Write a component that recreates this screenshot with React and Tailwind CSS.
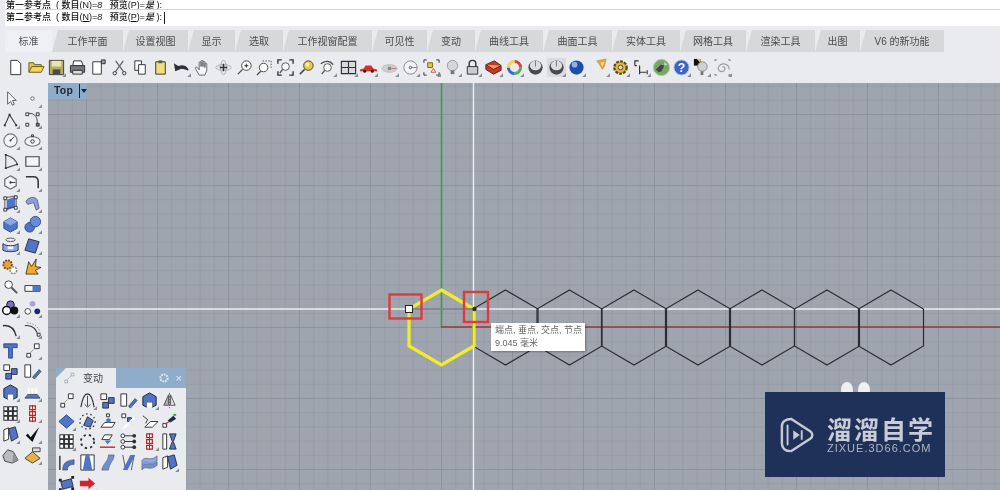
import React from 'react';

const TABS = [
  { label: '标准', w: 'w-[47px]', active: true },
  { label: '工作平面', w: 'w-[71px]' },
  { label: '设置视图', w: 'w-[65px]' },
  { label: '显示', w: 'w-[47px]' },
  { label: '选取', w: 'w-[48px]' },
  { label: '工作视窗配置', w: 'w-[89px]' },
  { label: '可见性', w: 'w-[55px]' },
  { label: '变动', w: 'w-[48px]' },
  { label: '曲线工具', w: 'w-[68px]' },
  { label: '曲面工具', w: 'w-[69px]' },
  { label: '实体工具', w: 'w-[68px]' },
  { label: '网格工具', w: 'w-[66px]' },
  { label: '渲染工具', w: 'w-[69px]' },
  { label: '出图', w: 'w-[45px]' },
  { label: 'V6 的新功能', w: 'w-[84px]' },
];

const B = '#4f74c8';
const D = '#2f3136';
const G = '#8a8d92';

const ICONS = {
  newDoc: <path d="M5 2.5h7l3.5 3.5v11.5H5z" fill="#fff" stroke={D} />,
  open: <><path d="M2 15V5h5l1 2h7v2" fill="#e8c44a" stroke="#6b5a10" /><path d="M2 15l3-6h13l-3 6z" fill="#f4d35e" stroke="#6b5a10" /></>,
  save: <><path d="M2.5 2.5h15v15h-15z" fill="#b5ad62" stroke="#3c3c3c" /><path d="M5 3h10v6H5z" fill="#e9e4b8" /><path d="M6 12h8v5H6z" fill="#4a4a4a" /></>,
  print: <><path d="M6 3h8l2 5H5z" fill="#fff" stroke={D} /><path d="M2.5 8h15v7h-15z" fill="#777" stroke={D} /><path d="M5 13h10v4H5z" fill="#ddd" stroke={D} /></>,
  props: <><path d="M4 4h9v13H4z" fill="#fff" stroke={D} /><path d="M13 2h4v4h-4z" fill="#999" stroke={D} /></>,
  cut: <><path d="M6 3l8 11M14 3L6 14" stroke="#666" strokeWidth="1.4" fill="none" /><circle cx="5" cy="16" r="1.8" fill="none" stroke={D} /><circle cx="15" cy="16" r="1.8" fill="none" stroke={D} /></>,
  copy: <><path d="M4 3h7v10H4z" fill="#fff" stroke={D} /><path d="M8 7h7v10H8z" fill="#fff" stroke={D} /></>,
  paste: <><path d="M5 4h10v13H5z" fill="#f2df79" stroke={D} /><path d="M8 2.5h4v3H8z" fill="#555" /></>,
  undo: <path d="M17 13c-2-5-7-6-12-3M3 7l1 6 5-2z" fill={D} stroke={D} strokeWidth="1.5" />,
  hand: <path d="M6.5 18L2.5 11c-.5-1 1-2 2-1l2 2.5V5c0-1.5 2-1.5 2 0v4V3.5c0-1.5 2-1.5 2 0V9V4.500c0-1.500 2-1.500 2 0V10V6.500c0-1.500 2-1.500 2 0V13l-2 5z" fill="#f4f5f6" stroke="#444" strokeWidth=".8" />,
  axes: <><ellipse cx="10" cy="10" rx="8" ry="3" fill="none" stroke="#aaa" /><ellipse cx="10" cy="10" rx="3" ry="7.5" fill="none" stroke="#aaa" /><path d="M10 6v8M6 10h8" stroke={D} strokeWidth="1.6" /></>,
  zoomPlus: <><circle cx="12" cy="8" r="5" fill="#fff" stroke="#444" /><path d="M8 12l-5 5M10 8h4M12 6v4" stroke="#444" strokeWidth="1.2" /></>,
  zoomWin: <><path d="M8 3h9v9" fill="none" stroke="#555" strokeDasharray="1.5 1.5" /><circle cx="9" cy="10" r="4.5" fill="#fff" stroke="#444" /><path d="M6 14l-4 4" stroke="#444" strokeWidth="1.4" /></>,
  zoomExt: <><path d="M2 6V2h4M14 2h4v4M2 14v4h4M18 14v4h-4" fill="none" stroke={D} strokeWidth="1.4" /><circle cx="10" cy="9" r="4" fill="#fff" stroke="#555" /><path d="M7 12l-3 4" stroke="#555" strokeWidth="1.4" /></>,
  zoomSel: <><circle cx="12" cy="8" r="5" fill="#e9c93f" stroke="#444" /><circle cx="11" cy="7" r="2" fill="#fff6c0" /><path d="M8 12l-5 5" stroke="#444" strokeWidth="1.6" /></>,
  rotView: <><path d="M3 6c5-4 10-3 13 1" fill="none" stroke="#444" strokeWidth="1.3" /><circle cx="10" cy="10" r="4" fill="#fff" stroke="#555" /><path d="M7 13l-3 4" stroke="#555" strokeWidth="1.4" /></>,
  grid4: <path d="M2.5 3.5h15v13h-15zM10 3.5v13M2.5 10h15" fill="#d8dadd" stroke={D} strokeWidth="1.2" />,
  car: <><path d="M1 12l4-1 2-3h6l2 3 4 1v2H1z" fill="#d3302c" /><circle cx="6" cy="14" r="1.6" fill="#222" /><circle cx="14" cy="14" r="1.6" fill="#222" /></>,
  hide: <><ellipse cx="10" cy="11" rx="8" ry="4" fill="#cfd1d5" stroke="#bbb" /><circle cx="10" cy="11" r="2" fill="#888" /><path d="M12 11h5" stroke="#c66" /></>,
  circleDot: <><circle cx="10" cy="10" r="7" fill="#f2f3f5" stroke="#888" /><circle cx="10" cy="10" r="1.3" fill="none" stroke="#555" /><path d="M11 10h6" stroke="#888" /></>,
  ptsBox: <><path d="M2 5V2h3M15 2h3v3M2 15v3h3M15 18h3v-3" fill="none" stroke={D} /><path d="M6 5h5v5H6z" fill="#eac73d" stroke="#7a6512" /><path d="M12 11l2.5 4h-5z" fill="#fff" stroke="#c55" /></>,
  bulb: <><circle cx="10" cy="8" r="5.5" fill="#d4d6d9" stroke="#999" /><path d="M8 13h4v4H8z" fill="#777" /></>,
  lock: <><path d="M6.5 9V6a3.5 3.5 0 017 0v3" fill="none" stroke="#333" strokeWidth="1.5" /><path d="M4.5 9h11v8h-11z" fill="#c9cbce" stroke="#333" /></>,
  book: <><path d="M2 7l9-4 7 5v5l-8 4-8-5z" fill="#c8352c" stroke="#5a2318" /><path d="M2 7l8 5 8-4" fill="#e8a23d" stroke="#5a2318" /></>,
  wheel: <><circle cx="10" cy="10" r="6" fill="none" stroke="#ddd" strokeWidth="4" /><path d="M10 2a8 8 0 018 8h-3a5 5 0 00-5-5z" fill="#e23d3d" /><path d="M18 10a8 8 0 01-8 8v-3a5 5 0 005-5z" fill="#3dbb4d" /><path d="M10 18a8 8 0 01-8-8h3a5 5 0 005 5z" fill="#3a62d8" /><path d="M2 10a8 8 0 018-8v3a5 5 0 00-5 5z" fill="#eedd3a" /></>,
  sphere: <><circle cx="10" cy="10" r="7.5" fill="#4a4a4a" /><ellipse cx="10" cy="8" rx="6" ry="5" fill="#dcdde0" /><path d="M10 3v6" stroke="#777" /></>,
  sphereBox: <><path d="M0 0h20v20H0z" fill="#d9dbde" /><circle cx="10" cy="10" r="7.5" fill="#4a4a4a" /><ellipse cx="10" cy="8" rx="6" ry="5" fill="#dcdde0" /><path d="M10 3v6" stroke="#777" /></>,
  sphereBlue: <><circle cx="10" cy="10" r="7.5" fill="#1f4ea8" /><circle cx="8" cy="7" r="3" fill="#8fb0ea" /></>,
  funnel: <><path d="M6 3l10-2-2 8-2 3-3-5z" fill="#e9a53a" stroke="#b58a3a" strokeWidth=".6" /><path d="M10 5l4-1-2 5z" fill="#f6dfae" /></>,
  gear: <><circle cx="10" cy="10" r="6.5" fill="#e3b93d" stroke="#5a4a14" strokeWidth="2.4" strokeDasharray="3 1.2" /><circle cx="10" cy="10" r="2.5" fill="#d9d9d2" stroke="#5a4a14" /></>,
  dim: <path d="M3 8V3h4M3 8h2M8 8v7h7M8 17v-4M16 17v-4M10 15h4" fill="none" stroke={D} strokeWidth="1.2" />,
  globe: <><circle cx="10" cy="10" r="8.5" fill="#7ba468" stroke="#aac7a0" /><path d="M4 12l5-5 4 1-3 6-3 1z" fill="#3d4a38" /><path d="M13 4l3 3-3 1z" fill="#cfe0c6" /></>,
  help: <><circle cx="10" cy="10" r="8" fill="#3f63c6" stroke="#b9c5e6" /><text x="10" y="14.5" textAnchor="middle" fontSize="13" fontWeight="700" fill="#fff" fontFamily="Liberation Sans, sans-serif">?</text></>,
  bulb2: <><path d="M2 1h7v7H2z" fill="#111" /><path d="M5 1h4v4z" fill="#f3d31f" /><circle cx="11" cy="9" r="5" fill="#cfd1d4" stroke="#888" /><path d="M9 14h3v4H9z" fill="#777" /></>,
  spiral: <><path d="M10 10c1-2 4 0 2 3-3 3-8 0-6-4 3-5 11-3 11 3" fill="none" stroke="#999" strokeWidth="1.2" /><path d="M2 17v1h2M18 17v1h-2M2 3V2h2M18 3V2h-2" fill="none" stroke="#666" /></>,

  arrow: <path d="M7 3v13l3-3 2 4 2-1-2-4h4z" fill="#fff" stroke="#555" />,
  pointDot: <circle cx="10" cy="10" r="1.8" fill="#fff" stroke="#666" />,
  polyline: <><path d="M4 16L9 5l7 11" fill="none" stroke="#444" strokeWidth="1.2" /><path d="M3 15h2v2H3zM8 4h2v2H8zM15 15h2v2h-2z" fill={D} /></>,
  curvePts: <><path d="M4 4c6-2 12 2 11 11" fill="none" stroke="#444" /><path d="M3 3h3v3H3zM14 3h3v3h-3zM3 14h3v3H3z" fill="#fff" stroke={D} /><path d="M14 14h3v3h-3z" fill="#777" stroke={D} /></>,
  circle: <><circle cx="10" cy="10" r="7" fill="#f3f4f6" stroke="#777" strokeWidth="1.2" /><path d="M10 10l4-4" stroke={D} /><circle cx="10" cy="10" r="1" fill={D} /></>,
  ellipse: <><ellipse cx="10" cy="11" rx="8" ry="5" fill="#f3f4f6" stroke="#777" strokeWidth="1.2" /><circle cx="10" cy="11" r="1.8" fill="none" stroke={D} /><path d="M9 4h2v2H9z" fill="none" stroke={D} /></>,
  arc: <><path d="M5 3c7 2 11 6 12 10L5 17z" fill="none" stroke="#555" strokeWidth="1.2" /><path d="M4 2h2v2H4zM16 12h2v2h-2zM4 16h2v2H4z" fill={D} /></>,
  rect: <path d="M3 5h14v10H3z" fill="#f3f4f6" stroke="#444" strokeWidth="1.2" />,
  polygon: <><path d="M10 3l6 3.5v7L10 17l-6-3.5v-7z" fill="#f3f4f6" stroke="#666" strokeWidth="1.2" /><circle cx="10" cy="10" r="1.2" fill={D} /><path d="M10 10h5" stroke={D} /></>,
  fillet: <path d="M3 4h8c3 0 5 2 5 5v7" fill="none" stroke="#333" strokeWidth="1.6" />,
  surfPts: <><path d="M6 6l9-3v11l-9 3z" fill={B} /><path d="M3 4l13-2M4 16l12-3M4 4v13M16 2v11" stroke={D} fill="none" strokeWidth=".8" /><path d="M3 3h3v3H3zM14 2h3v3h-3zM3 15h3v3H3zM14 13h3v3h-3z" fill="#fff" stroke={D} /></>,
  surfFold: <path d="M3 8c3-5 9-6 12-2l2 9-3 2-3-8-6 2z" fill="#8aa0dc" stroke="#555" strokeWidth=".8" />,
  cube: <><path d="M3 7l7-4 7 4v7l-7 4-7-4z" fill={B} stroke="#2d4a94" /><path d="M3 7l7 4 7-4-7-4z" fill="#8da8e6" /></>,
  spheres: <><circle cx="7" cy="13" r="5" fill={B} stroke="#2d4a94" /><circle cx="13" cy="7" r="5.5" fill="#6a8ad8" stroke="#2d4a94" /></>,
  cylCut: <><ellipse cx="10" cy="4" rx="5" ry="1.8" fill="none" stroke="#555" /><path d="M2 8v7c3 2 13 2 16 0V8c-3 3-13 3-16 0z" fill="#8aa6e4" stroke="#333" /><path d="M7 11h6v3H7z" fill="#fff" /></>,
  panelBlue: <path d="M6 3l11 3-4 12-11-3z" fill={B} stroke={D} />,
  gearOrange: <><circle cx="7" cy="8" r="4.5" fill="#e8a33a" stroke="#7a4e10" strokeWidth="2" strokeDasharray="2 1" /><circle cx="13" cy="14" r="3.5" fill="#fff" stroke="#888" strokeWidth="1.6" strokeDasharray="2 1" /></>,
  burst: <path d="M3 18l3-13 3 5 5-8-1 8 6 1-6 3 3 4z" fill="#f1aa26" stroke="#222" strokeWidth=".8" />,
  zoomRect: <><circle cx="8" cy="7" r="4" fill="#fff" stroke="#444" /><path d="M11 10l6 6" stroke="#555" strokeWidth="2" /></>,
  rectLine: <><path d="M2 8h16v6H2z" fill="#fff" stroke={D} /><path d="M10 8h8v6h-8z" fill={B} /></>,
  circles3: <><circle cx="10" cy="6" r="4" fill="#7b6fc0" stroke="#111" /><circle cx="6" cy="12" r="4.2" fill="#fff" stroke="#111" strokeWidth="1.6" /><circle cx="14" cy="12" r="4.2" fill="#111" /></>,
  dots3: <><circle cx="10" cy="5" r="3" fill="#aaa3d9" /><circle cx="5" cy="13" r="3" fill="#fff" stroke="#444" /><circle cx="15" cy="13" r="3" fill="#1b2a6b" /></>,
  arcA: <path d="M2 6c7-1 12 3 14 11" fill="none" stroke="#333" strokeWidth="1.5" />,
  arcB: <><path d="M2 6c7-1 12 3 14 11" fill="none" stroke="#333" strokeWidth="1.2" /><path d="M4 3c7 0 12 4 14 10" fill="none" stroke="#888" strokeDasharray="1.5 1.5" /><path d="M15 14h3v3h-3z" fill="#fff" stroke={D} /></>,
  textT: <path d="M3 3h14v4h-5v11H8V7H3z" fill={B} stroke="#2d4a94" />,
  movePts: <><path d="M4 13h4v4H4z" fill="#fff" stroke={D} /><path d="M12 3h5v5h-5z" fill="#fff" stroke={D} /><path d="M8 12l4-4" stroke="#666" strokeDasharray="1.5 1" /></>,
  boxes: <><path d="M3 3h6v6H3z" fill="#fff" stroke={D} /><path d="M11 7h6v6h-6z" fill={B} stroke={D} /><path d="M5 12h6v6H5z" fill={B} stroke={D} /></>,
  rectSlash: <><path d="M2 3h6v13H2z" fill="#fff" stroke={D} /><path d="M10 16l7-8 2 2-7 8z" fill={B} stroke="#333" strokeWidth=".7" /></>,
  cubeHole: <><path d="M3 6l7-4 7 4v9l-4 2v-5H7v5l-4-2z" fill={B} stroke="#222" /><path d="M7 12h6v5H7z" fill="#fff" /></>,
  whiteLines: <><path d="M2 16l3-4h10l3 4z" fill={B} stroke="#333" strokeWidth=".7" /><path d="M6 5v6M10 5v6M14 5v6" stroke="#fff" strokeWidth="2" /></>,
  grid: <path d="M3 3h4v4H3zM8 3h4v4H8zM13 3h4v4h-4zM3 8h4v4H3zM8 8h4v4H8zM13 8h4v4h-4zM3 13h4v4H3zM8 13h4v4H8zM13 13h4v4h-4z" fill="#fff" stroke={D} strokeWidth="1.1" />,
  chain: <><path d="M7 2h6v4H7zM7 8h6v4H7zM7 14h6v4H7z" fill="#fff" stroke="#b3282a" strokeWidth="1.3" /><path d="M10 1v18" stroke="#b3282a" /></>,
  panelPair: <><path d="M3 5l5-2v12l-5 2z" fill="#fff" stroke={D} /><path d="M8 4l7-2 3 11-7 4z" fill={B} stroke="#333" /></>,
  check: <path d="M3 11l2-2 3 4 9-11-7 16z" fill="#111" />,
  solidGray: <><path d="M2 10l5-6 6 2 5 9-6 3-8-2z" fill="#b9bbbf" stroke="#444" /><path d="M13 6l5 9-6 3z" fill="#8e9096" /></>,
  pyramid: <><path d="M10 6l8 7-8 5-8-5z" fill="#e7b14a" stroke="#444" /><path d="M10 2h8v4h-8z" fill="#ddd" stroke="#444" /></>,
  arch: <><path d="M3 17C5 6 8 3 10 3s5 3 7 14" fill="none" stroke={D} strokeWidth="1.2" /><path d="M10 5v11M7 14l3 3 3-3" fill="none" stroke="#444" /></>,
  mirror: <><path d="M10 2v16" stroke="#666" strokeDasharray="2 1" /><path d="M9 4L4 15h5z" fill="#aab" stroke="#555" /><path d="M11 4l5 11h-5z" fill="#dde" stroke="#555" /></>,
  diamond: <path d="M10 3l8 7-8 7-8-7z" fill={B} stroke="#2d4a94" />,
  rotateDots: <><path d="M10 5l6 4-3 7-7-2z" fill={B} stroke="#333" /><circle cx="10" cy="10" r="8" fill="none" stroke={D} strokeDasharray="1.5 3" strokeWidth="1.4" /></>,
  planePts: <><path d="M9 2h3v3H9z" fill="#fff" stroke={D} /><path d="M3 16l4-5h11l-3 5z" fill="#fff" stroke={D} /><circle cx="11" cy="9" r="2.5" fill={B} /></>,
  ptsSlash: <><path d="M3 2h4v4H3z" fill="#fff" stroke={D} /><path d="M9 6h4v4H9z" fill={B} stroke={D} /><path d="M4 18l12-12" stroke="#fff" strokeWidth="2" /></>,
  plane: <><path d="M3 4l5 4-2 4" fill="none" stroke={D} /><path d="M5 16l6-6h8l-6 6z" fill="#fff" stroke={D} /></>,
  axesRed: <><path d="M3 12h4v4H3z" fill="#fff" stroke={D} /><path d="M5 13l10-6" stroke="#c33" strokeWidth="1.2" /><path d="M8 9l6-5 3 3-6 4z" fill="#1f2a55" /><path d="M14 2h3v2h-3z" fill="#3a3" /></>,
  ringDots: <circle cx="10" cy="10" r="7" fill="none" stroke={D} strokeWidth="2" strokeDasharray="2.5 3.2" />,
  planeRed: <><path d="M7 3h8l-3 5H4z" fill="#fff" stroke={D} /><path d="M7 9h7l-4 4z" fill={B} /><path d="M2 16h16" stroke="#c33" strokeWidth="1.6" /></>,
  ptsArrows: <><circle cx="4" cy="4" r="2" fill="#fff" stroke={D} /><circle cx="4" cy="10" r="2" fill="#fff" stroke={D} /><circle cx="4" cy="16" r="2" fill="#fff" stroke={D} /><path d="M6 4h10M6 10h10M6 16h10" stroke={D} /><circle cx="16" cy="4" r="2" fill={D} /><circle cx="16" cy="10" r="2" fill={D} /><circle cx="16" cy="16" r="2" fill={D} /></>,
  hourglass: <><path d="M3 2h4v16H3z" fill="#fff" stroke={D} /><path d="M10 2h7l-3 8 3 8h-7l3-8z" fill={B} stroke={D} /></>,
  bend: <><path d="M3 3v15" stroke={D} strokeWidth="1.5" /><path d="M6 18c0-8 4-10 12-11v5c-5 0-7 2-7 6z" fill={B} stroke="#444" strokeWidth=".6" /></>,
  taper: <><path d="M3 2h14v16H3z" fill="#fff" stroke={D} /><path d="M8 2h4l3 16H5z" fill={B} /></>,
  twist: <path d="M11 2h6c0 6-5 8-6 16H4c1-7 7-9 7-16z" fill="#6f8fd8" stroke="#555" strokeWidth=".6" />,
  twist2: <><path d="M4 2l3 16M16 2l-3 16" stroke="#555" /><path d="M12 2h5L9 18H4z" fill={B} /></>,
  wave: <><path d="M2 8c4-6 8 2 16-5v5c-8 7-12-1-16 5z" fill="#8aa6e4" stroke="#555" strokeWidth=".6" /><path d="M2 14c4-6 8 2 16-5v4c-8 7-12-1-16 5z" fill="#6f8fd8" stroke="#555" strokeWidth=".6" /></>,
  cage: <><path d="M4 8l11-3 2 8-11 3z" fill={B} stroke="#333" /><path d="M2 5h3v3H2zM15 2h3v3h-3zM2 15h3v3H2zM15 14h3v3h-3z" fill="#222" /></>,
  redArrow: <path d="M2 7h9V4l7 6-7 6v-3H2z" fill="#d8222a" />,
};

const TOP_ICONS = [
  ['newDoc'], ['open'], ['save', 1], ['print'], ['props'], ['cut'], ['copy'], ['paste'], ['undo', 1], ['hand'],
  ['axes'], ['zoomPlus'], ['zoomWin'], ['zoomExt'], ['zoomSel'], ['rotView', 1], ['grid4', 1], ['car', 1], ['hide', 1],
  ['circleDot', 1], ['ptsBox', 1], ['bulb', 1], ['lock', 1], ['book', 1], ['wheel', 1], ['sphere'], ['sphereBox', 1], ['sphereBlue', 1],
];
const TOP_ICONS_2 = [['funnel', 1], ['gear', 1], ['dim', 1], ['globe'], ['help', 1], ['bulb2', 1], ['spiral', 1]];

const SIDE_ICONS = [
  ['arrow'], ['pointDot', 1], ['polyline', 1], ['curvePts', 1], ['circle', 1], ['ellipse', 1], ['arc', 1], ['rect', 1],
  ['polygon', 1], ['fillet', 1], ['surfPts', 1], ['surfFold', 1], ['cube', 1], ['spheres', 1], ['cylCut', 1], ['panelBlue', 1],
  ['gearOrange'], ['burst'], ['zoomRect'], ['rectLine'], ['circles3', 1], ['dots3', 1], ['arcA', 1], ['arcB', 1],
  ['textT'], ['movePts', 1], ['boxes'], ['rectSlash'], ['cubeHole', 1], ['whiteLines', 1], ['grid', 1], ['chain', 1],
  ['panelPair', 1], ['check', 1], ['solidGray'], ['pyramid', 1],
];

const PANEL_ICONS = [
  ['movePts'], ['arch', 1], ['boxes'], ['rectSlash'], ['cubeHole', 1], ['mirror'],
  ['diamond', 1], ['rotateDots'], ['planePts'], ['ptsSlash'], ['plane'], ['axesRed'],
  ['grid', 1], ['ringDots'], ['planeRed'], ['ptsArrows'], ['chain', 1], ['hourglass'],
  ['bend'], ['taper'], ['twist'], ['twist2'], ['wave'], ['panelPair', 1],
  ['cage'], ['redArrow', 1],
];

const Icon = ({ name, flag }) => (
  <svg viewBox="0 0 20 20" className="block w-[19px] h-[19px]">
    {ICONS[name]}
    {flag ? <path d="M20 16v4h-4z" fill={G} /> : null}
  </svg>
);

const CommandText = ({ first }) => (
  <span className="whitespace-nowrap">
    {first ? '第一参考点' : '第二参考点'} &nbsp;(&nbsp;数目(<u>N</u>)=<i>8</i>&nbsp;&nbsp;&nbsp;预览(<u>P</u>)=<i>是</i>&nbsp;):
  </span>
);

// page coordinates, the svg viewBox starts where the viewport does
const VIEW_W = 952;
const VIEW_H = 407;
const minorX = Array.from({ length: 68 }, (_, i) => 441.5 - 28 * 14.2 + i * 14.2);
const minorY = Array.from({ length: 30 }, (_, i) => 327.5 - 17 * 14.2 + i * 14.2);
const hexCenters = [505.5, 569.5, 634, 698, 762, 827, 891];
const hexPoints = (c) => `${c},290 ${c + 32.5},309 ${c + 32.5},346 ${c},365 ${c - 32.5},346 ${c - 32.5},309`;

const Viewport = () => (
  <svg viewBox={`48 83 ${VIEW_W} ${VIEW_H}`} className="absolute inset-0 w-full h-full">
    {minorX.map((x, i) => (
      <line key={x} x1={x} x2={x} y1="83" y2="490" stroke="#858b94" strokeOpacity={i % 5 === 3 ? 0.7 : 0.28} />
    ))}
    {minorY.map((y, i) => (
      <line key={y} y1={y} y2={y} x1="48" x2="1000" stroke="#858b94" strokeOpacity={i % 5 === 2 ? 0.7 : 0.28} />
    ))}
    <ellipse cx="847" cy="390" rx="6" ry="8" fill="#eef0f2" />
    <ellipse cx="864" cy="390" rx="6" ry="8" fill="#eef0f2" />
    <line x1="441.5" x2="441.5" y1="83" y2="327" stroke="#3f9a4c" strokeWidth="1.6" />
    <line x1="441" x2="1000" y1="327" y2="327" stroke="#96393d" strokeWidth="1.4" />
    <line x1="48" x2="1000" y1="309" y2="309" stroke="#eceef0" strokeWidth="1.4" />
    <line x1="473.5" x2="473.5" y1="83" y2="490" stroke="#eceef0" strokeWidth="1.4" />
    {hexCenters.map((c) => (
      <polygon key={c} points={hexPoints(c)} fill="none" stroke="#2a2d33" strokeWidth="1.2" />
    ))}
    <polygon points={hexPoints(441.5)} fill="none" stroke="#f2ec2c" strokeWidth="3.2" />
    <line x1="409" x2="474" y1="309" y2="309" stroke="#33363b" strokeWidth="1.2" />
    <rect x="389.5" y="294.5" width="32" height="24" fill="none" stroke="#dd3b3b" strokeWidth="2.4" />
    <rect x="464" y="292" width="24" height="30" fill="none" stroke="#dd3b3b" strokeWidth="2.4" />
    <rect x="405.5" y="305.5" width="7" height="7" fill="#fff" stroke="#222" />
    <circle cx="474.5" cy="309" r="2.2" fill="#1f3320" />
  </svg>
);

const Panel = () => (
  <div className="absolute left-[8px] top-[285px] w-[130px] h-[122px] overflow-hidden">
    <div className="flex h-[20px] bg-[#8fadcb]">
      <div className="w-[60px] flex items-center gap-[7px] pl-[6px] bg-[#e9ebef] [clip-path:polygon(10px_0,100%_0,100%_100%,0_100%,0_10px)]">
        <svg viewBox="0 0 20 20" className="w-[14px] h-[14px]">
          <path d="M4 13h4v4H4zM13 3h4v4h-4z" fill="none" stroke="#9a9ca0" />
          <path d="M8 12l5-5" stroke="#9a9ca0" />
        </svg>
        <span className="text-[10px] text-[#444]">变动</span>
      </div>
      <div className="flex-1 flex items-center justify-end gap-[6px] pr-[4px]">
        <svg viewBox="0 0 20 20" className="w-[12px] h-[12px]">
          <circle cx="10" cy="10" r="6" fill="none" stroke="#e4e6ea" strokeWidth="3.4" strokeDasharray="3 1.5" />
        </svg>
        <span className="text-[11px] leading-none text-[#e4e6ea]">×</span>
      </div>
    </div>
    <div className="grid grid-cols-[repeat(6,20.7px)] auto-rows-[20.7px] justify-start pt-[2px] h-[102px] bg-[#e9ebef]">
      {PANEL_ICONS.map(([name, flag], i) => (
        <div key={i} className="flex items-center justify-center">
          <Icon name={name} flag={flag} />
        </div>
      ))}
    </div>
  </div>
);

const Watermark = () => (
  <div className="absolute left-[717px] top-[309px] w-[180px] h-[85px] bg-[#1f3059] flex items-center pl-[15px] gap-[13px]">
    <svg viewBox="0 0 36 38" className="w-[34px] h-[36px]">
      <path d="M12 2l20 13c3 2 3 6 0 8L12 36" fill="none" stroke="#c6cad3" strokeWidth="2.6" strokeLinecap="round" />
      <path d="M12 2C6 2 2 5 2 10v18c0 5 4 8 8 8" fill="none" stroke="#c6cad3" strokeWidth="2.6" strokeLinecap="round" />
      <path d="M8 9v20" stroke="#c6cad3" strokeWidth="2" strokeLinecap="round" />
      <path d="M14 14l7 5-7 5z" fill="#c6cad3" />
      <path d="M23 14v10" stroke="#c6cad3" strokeWidth="2" />
    </svg>
    <div className="flex flex-col -mt-[2px]">
      <span className='text-[25px] leading-[28px] tracking-[2px] font-bold text-[#c8ccd6] whitespace-nowrap font-["Noto_Sans_CJK_SC",sans-serif]'>溜溜自学</span>
      <span className='text-[11px] leading-[12px] tracking-[1px] text-[#aeb5c6] whitespace-nowrap font-["Liberation_Sans",sans-serif]'>ZIXUE.3D66.COM</span>
    </div>
  </div>
);

export default function App() {
  return (
    <div className='w-[1000px] h-[490px] overflow-hidden bg-[#e9ebef] flex flex-col blur-[0.4px] font-["Liberation_Sans","Noto_Sans_CJK_SC",sans-serif]'>
      {/* command history */}
      <div className="h-[26px] shrink-0 pl-[5px]">
        <div className="h-full bg-white text-[9px] font-medium text-[#111]">
          <div className="h-[10px] border-b border-[#d6d6d6] overflow-hidden flex items-end pl-[1px]">
            <span className="relative top-[2px] leading-[12px]"><CommandText first /></span>
          </div>
          <div className="h-[15px] pl-[1px] flex items-center leading-[15px]">
            <CommandText />
            <span className="ml-[2px] w-px h-[12px] bg-[#222]" />
          </div>
        </div>
      </div>

      {/* ribbon tabs */}
      <div className="mt-[4px] h-[22px] shrink-0 flex pl-[5px] text-[10px]">
        {TABS.map((t) => (
          <div
            key={t.label}
            className={`${t.w} h-full flex items-center justify-center ${t.active ? 'bg-[#eef0f3] text-[#555] rounded-t-[3px]' : 'bg-[#d6d8da] text-[#4b4b4b] [clip-path:polygon(6px_0,100%_0,100%_100%,0_100%)]'}`}
          >
            {t.label}
          </div>
        ))}
      </div>

      {/* main toolbar */}
      <div className="h-[31px] shrink-0 flex items-center pl-[5px]">
        {TOP_ICONS.map(([name, flag]) => (
          <div key={name} className="w-[20.8px] flex justify-center">
            <Icon name={name} flag={flag} />
          </div>
        ))}
        <div className="w-[3px]" />
        {TOP_ICONS_2.map(([name, flag]) => (
          <div key={name} className="w-[20.3px] flex justify-center">
            <Icon name={name} flag={flag} />
          </div>
        ))}
      </div>

      <div className="flex-1 flex min-h-0">
        {/* left tool column */}
        <div className="w-[48px] shrink-0 pt-[4.5px]">
          <div className="grid grid-cols-[21.5px_21.5px] auto-rows-[21px]">
            {SIDE_ICONS.map(([name, flag], i) => (
              <div key={i} className="flex items-center justify-center">
                <Icon name={name} flag={flag} />
              </div>
            ))}
          </div>
        </div>

        {/* Top viewport */}
        <div className="relative flex-1 bg-[#9fa5ae]">
          <Viewport />
          <div className="absolute left-0 top-0 w-[39px] h-[16px] bg-[#8fadcb] flex items-center pl-[6px]">
            <span className="text-[10.5px] font-bold text-[#1d2530] tracking-[0.2px]">Top</span>
            <span className="ml-[6px] w-px h-[14px] bg-[#1d2530]" />
            <span className="ml-[1px] w-0 h-0 border-x-[3px] border-x-transparent border-t-[4px] border-t-[#1d2530]" />
          </div>
          <div className="absolute left-[443px] top-[240px] w-[94px] h-[28px] bg-white shadow-[1px_1px_2px_rgba(0,0,0,0.3)] px-[4px] pt-[1px] text-[9px] leading-[13px] text-[#666] whitespace-nowrap">
            <div>端点, 垂点, 交点, 节点</div>
            <div>9.045 毫米</div>
          </div>
          <Panel />
          <Watermark />
        </div>
      </div>
    </div>
  );
}
